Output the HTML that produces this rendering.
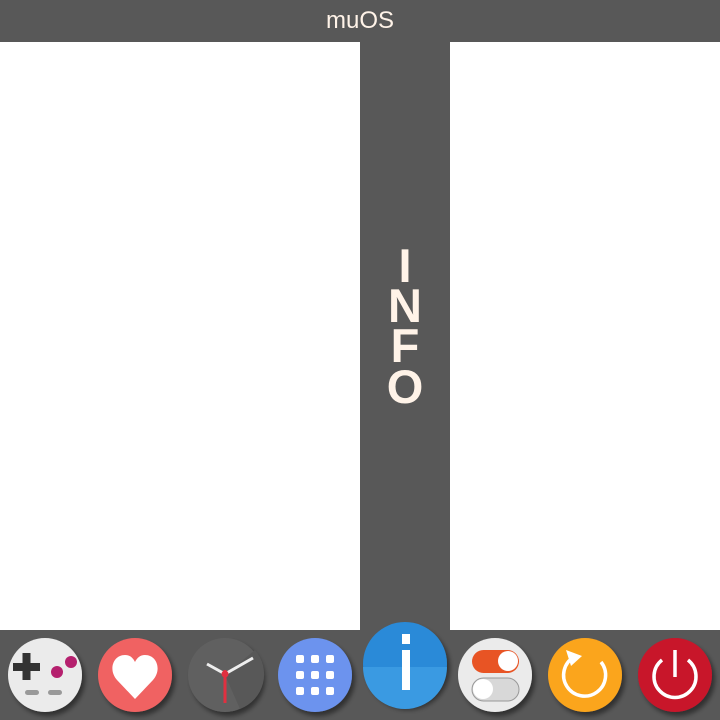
<!DOCTYPE html>
<html><head><style>
html,body{margin:0;padding:0;width:720px;height:720px;overflow:hidden;background:#585858;}
.t{position:absolute;font-family:"Liberation Sans",sans-serif;color:#fff3e8;}
</style></head><body>
<div style="position:absolute;left:0;top:42px;width:360px;height:588px;background:#fff"></div>
<div style="position:absolute;left:450px;top:42px;width:270px;height:588px;background:#fff"></div>
<div class="t" style="left:0;top:7px;width:720px;text-align:center;font-size:24px;">muOS</div>
<svg width="720" height="720" style="position:absolute;left:0;top:0">
<defs>
<filter id="sh" x="-30%" y="-30%" width="160%" height="160%"><feDropShadow dx="3" dy="4" stdDeviation="2.5" flood-color="#000" flood-opacity="0.45"/></filter>
</defs>
<g font-family="Liberation Sans,sans-serif" font-weight="bold" font-size="47" fill="#fff3e8" text-anchor="middle">
<text x="405" y="282">I</text><text x="405" y="322">N</text><text x="405" y="362">F</text><text x="405" y="403">O</text>
</g>
<g filter="url(#sh)"><circle cx="45" cy="675" r="37" fill="#ebebeb"/></g>
<rect x="13" y="663" width="27" height="8" fill="#333"/><rect x="22.5" y="653" width="8" height="27" fill="#333"/>
<circle cx="57" cy="672" r="6" fill="#b5206e"/><circle cx="71" cy="662" r="6" fill="#b5206e"/>
<rect x="25" y="690" width="14" height="5" rx="2.5" fill="#999"/><rect x="48" y="690" width="14" height="5" rx="2.5" fill="#999"/>
<g filter="url(#sh)"><circle cx="135" cy="675" r="37" fill="#f06262"/></g>
<path d="M135 699 L117 680 C108 670 113 655 125 655 C130 655 133 658 135 662 C137 658 140 655 145 655 C157 655 162 670 153 680 Z" fill="#fff"/>
<g filter="url(#sh)"><circle cx="225" cy="675" r="37" fill="#606060"/></g>
<path d="M225 675 L255 650 A37 37 0 0 1 240 709 Z" fill="#585858"/>
<line x1="225" y1="674" x2="207" y2="664" stroke="#eee" stroke-width="3"/>
<line x1="225" y1="674" x2="253" y2="658" stroke="#eee" stroke-width="3"/>
<line x1="225" y1="670" x2="225" y2="703" stroke="#e03040" stroke-width="3"/>
<circle cx="225" cy="674" r="3.5" fill="#e03040"/>
<g filter="url(#sh)"><circle cx="315" cy="675" r="37" fill="#6c93ee"/></g>
<g fill="#fff">
<rect x="296" y="655" width="8" height="8" rx="2"/><rect x="311" y="655" width="8" height="8" rx="2"/><rect x="326" y="655" width="8" height="8" rx="2"/>
<rect x="296" y="671" width="8" height="8" rx="2"/><rect x="311" y="671" width="8" height="8" rx="2"/><rect x="326" y="671" width="8" height="8" rx="2"/>
<rect x="296" y="687" width="8" height="8" rx="2"/><rect x="311" y="687" width="8" height="8" rx="2"/><rect x="326" y="687" width="8" height="8" rx="2"/>
</g>
<g filter="url(#sh)"><circle cx="405" cy="664" r="42" fill="#2a8ad8"/></g>
<path d="M363 667 L447 667 A42 42 0 0 1 363 667 Z" fill="#3a9ae2"/>
<rect x="402" y="634" width="8" height="10" fill="#fff"/><rect x="402" y="650" width="8" height="40" fill="#fff"/>
<g filter="url(#sh)"><circle cx="495" cy="675" r="37" fill="#ebebeb"/></g>
<rect x="472" y="650" width="47" height="23" rx="11.5" fill="#e85424"/><circle cx="508" cy="661" r="10" fill="#fff"/>
<rect x="472" y="678" width="47" height="23" rx="11.5" fill="#d8d8d8" stroke="#999" stroke-width="1"/><circle cx="483" cy="689" r="10" fill="#fff"/>
<g filter="url(#sh)"><circle cx="585" cy="675" r="37" fill="#fba51e"/></g>
<path d="M601 662 A21 21 0 1 1 574 657" fill="none" stroke="#fff" stroke-width="3.5"/>
<path d="M566 650 L582 656 L571 666 Z" fill="#fff"/>
<g filter="url(#sh)"><circle cx="675" cy="675" r="37" fill="#c8142c"/></g>
<path d="M662 660 A21 21 0 1 0 688 660" fill="none" stroke="#fff" stroke-width="3.5"/>
<line x1="675" y1="650" x2="675" y2="677" stroke="#fff" stroke-width="3.5"/>
</svg>
</body></html>
